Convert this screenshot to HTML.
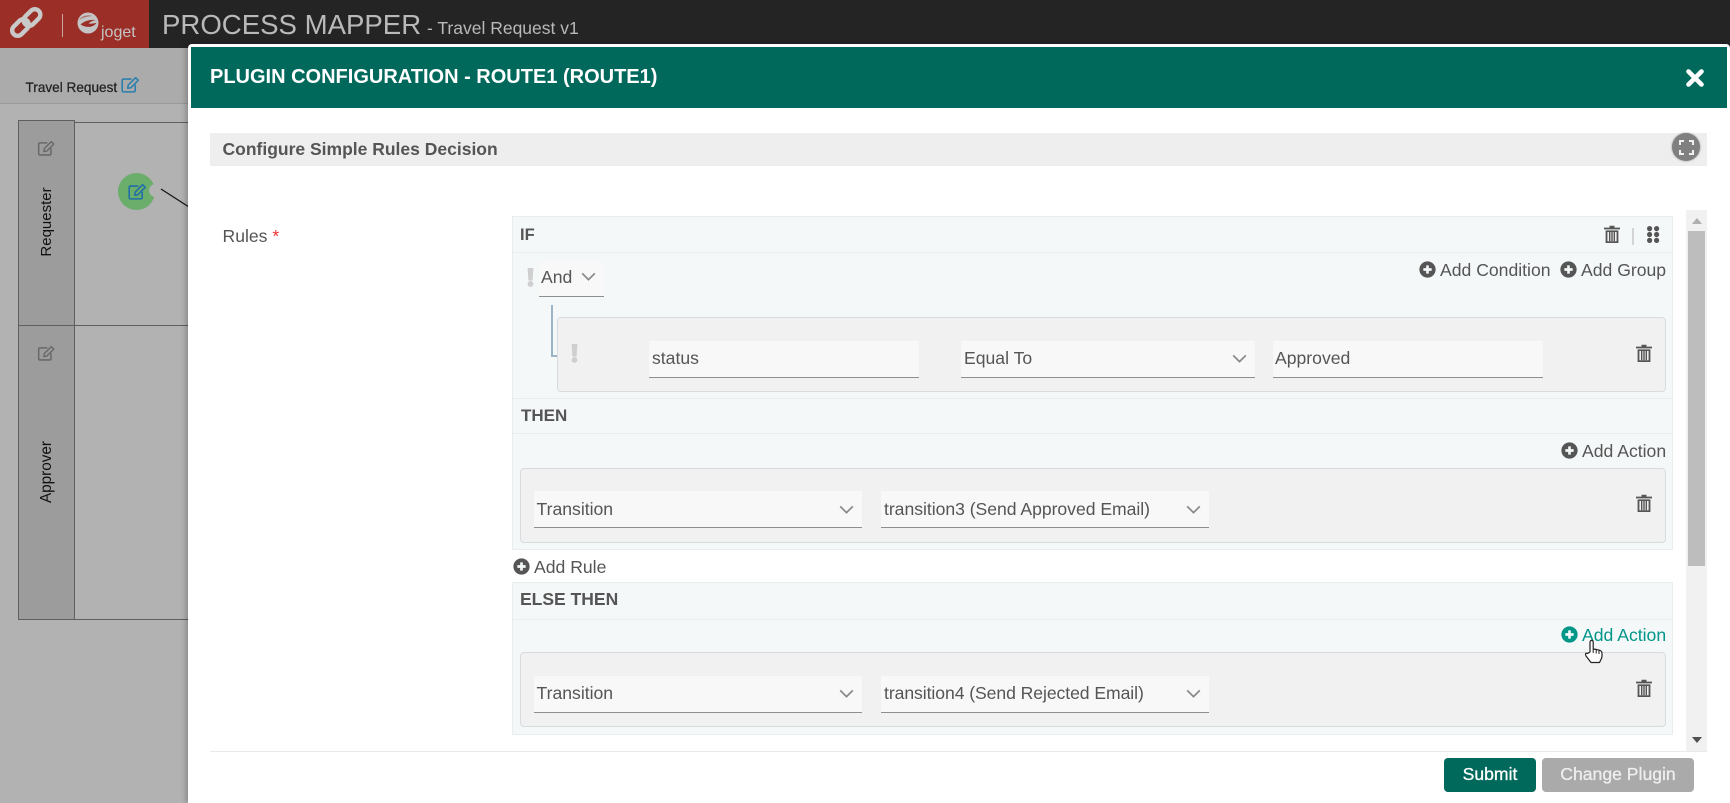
<!DOCTYPE html>
<html><head><meta charset="utf-8"><title>Process Mapper</title>
<style>
html,body{margin:0;padding:0;width:1730px;height:803px;overflow:hidden;background:#b2b2b2;font-family:"Liberation Sans",Arial,sans-serif;color:#555}
.a{position:absolute;box-sizing:border-box}
.t{position:absolute;white-space:nowrap;line-height:20px;font-size:17.6px;color:#555}
.b{font-weight:bold}
.sel{position:absolute;box-sizing:border-box;background:#f8f8f8;border-bottom:1px solid #8e8e8e}
.box{position:absolute;box-sizing:border-box;background:#f1f1f1;border:1px solid #d8dcde;border-radius:4px}
.rule{position:absolute;box-sizing:border-box;background:#f5f8f9;border:1px solid #e8edef}
.line{position:absolute;height:1px;background:#e8edef}
svg{position:absolute;overflow:visible}
</style></head><body>
<svg width="0" height="0" style="position:absolute"><defs>
<symbol id="plus" viewBox="0 0 18 18"><circle cx="9" cy="9" r="8.6" fill="currentColor"/><path d="M9 4.600v8.800M4.600 9h8.800" stroke="#f5f8f9" stroke-width="2.800" fill="none"/></symbol>
<symbol id="trash" viewBox="0 0 16 18"><path d="M0 2.600h16v1.800H0zM5.500 2.600V.8h5v1.800z" fill="#555"/><path d="M1.600 5.400h12.800V18H1.600z" fill="#555"/><path d="M3.400 7h9.200v9.300H3.400z" fill="#f1f1f1"/><path d="M5 7v9.300h1.400V7zM7.300 7v9.300h1.400V7zM9.600 7v9.300h1.400V7z" fill="#555"/></symbol>
<symbol id="chev" viewBox="0 0 16 10"><path d="M1 1.500l7 7 7-7" fill="none" stroke="#8a8a8a" stroke-width="1.900"/></symbol>
<symbol id="edit" viewBox="0 0 20 18"><path d="M11 3.200H2.600A1.400 1.400 0 0 0 1.200 4.600v10.800a1.400 1.400 0 0 0 1.400 1.400h11a1.400 1.400 0 0 0 1.400-1.400V9.200" fill="none" stroke="currentColor" stroke-width="1.700"/><path d="M7.600 9.600L15.400 1.800l2.800 2.800-7.800 7.800-3.400.6z" fill="none" stroke="currentColor" stroke-width="1.600" stroke-linejoin="round"/></symbol>
<symbol id="bang" viewBox="0 0 7 19"><path d="M.6 0h5.800l-.8 12.600H1.400z" fill="#cfcfcf"/><circle cx="3.500" cy="16" r="2.900" fill="#cfcfcf"/></symbol>
</defs></svg>

<!-- header -->
<div class="a" style="left:0;top:0;width:1730px;height:48px;background:#242424"></div>
<div class="a" style="left:0;top:0;width:149px;height:48px;background:#9b2f27"></div>
<svg style="left:0;top:0" width="60" height="48"><g fill="none" stroke="#c9c9c9" stroke-width="4.400"><rect x="-5.500" y="-9.500" width="11" height="19" rx="5.500" transform="translate(20.500 27.500) rotate(45)"/><rect x="-5.500" y="-9.500" width="11" height="19" rx="5.500" transform="translate(32 17.500) rotate(45)"/></g></svg>
<div class="a" style="left:62px;top:14px;width:1px;height:23px;background:#c9a5a2"></div>
<svg style="left:76px;top:11px" width="24" height="24" viewBox="0 0 24 24"><circle cx="12" cy="12" r="10.500" fill="#c4c4c4"/><path d="M4.500 13.500c4-3.500 9-5 15-4.500-3.500 1-5.500 2-7 3.500 2.500.3 5.500 0 8-.8-3 5-10.500 5.500-16 1.800z" fill="#9b2f27"/><path d="M3 9c3-4 8-5.500 13-4-5 .5-9 1.500-13 4z" fill="#9b2f27" opacity=".55"/></svg>
<div class="t" style="left:101px;top:24px;font-size:16px;line-height:18px;color:#c4c4c4">joget</div>
<div class="t" style="left:162px;top:8px;font-size:27.6px;line-height:34px;color:#b9b9b9" id="pm">PROCESS MAPPER</div>
<div class="t" style="left:427px;top:17px;font-size:17.500px;line-height:22px;color:#b9b9b9">- Travel Request v1</div>

<!-- backdrop canvas -->
<div class="a" style="left:0;top:48px;width:188px;height:56px;background:#ababab;border-bottom:1px solid #9a9a9a"></div>
<div class="t" style="left:25.500px;top:79px;font-size:13.600px;line-height:18px;color:#222;-webkit-text-stroke:.25px #222">Travel Request</div>
<svg style="left:121px;top:76px;color:#2b7fae" width="19" height="17"><use href="#edit" width="19" height="17"/></svg>
<div class="a" style="left:18px;top:120px;width:57px;height:206px;background:#9c9c9c;border:1px solid #5f5f5f"></div>
<div class="a" style="left:18px;top:325px;width:57px;height:295px;background:#9c9c9c;border:1px solid #5f5f5f"></div>
<div class="a" style="left:74px;top:122px;width:114px;height:1px;background:#5f5f5f"></div>
<div class="a" style="left:74px;top:325px;width:114px;height:1px;background:#5f5f5f"></div>
<div class="a" style="left:74px;top:619px;width:114px;height:1px;background:#5f5f5f"></div>
<svg style="left:37px;top:140px;color:#696969" width="19" height="16"><use href="#edit" width="19" height="16"/></svg>
<svg style="left:37px;top:345px;color:#696969" width="19" height="16"><use href="#edit" width="19" height="16"/></svg>
<div class="t" style="left:47px;top:222px;font-size:15px;line-height:18px;color:#111;transform:translate(-50%,-50%) rotate(-90deg)">Requester</div>
<div class="t" style="left:47px;top:472px;font-size:15.300px;line-height:18px;color:#111;transform:translate(-50%,-50%) rotate(-90deg)">Approver</div>
<div class="a" style="left:118px;top:173px;width:37px;height:37px;border-radius:50%;background:#6bad6b"></div>
<div class="a" style="left:149px;top:184px;width:13px;height:13px;border-radius:50%;background:#b2b2b2"></div>
<svg style="left:128px;top:183px;color:#1f6fa8" width="19" height="17"><use href="#edit" width="19" height="17"/></svg>
<svg style="left:0;top:0" width="190" height="220"><path d="M161 189L189 207" stroke="#111" stroke-width="1.200"/></svg>

<!-- modal -->
<div class="a" style="left:188px;top:44px;width:1542px;height:759px;background:#fff;border-radius:4px 4px 0 0;box-shadow:-2px 0 6px rgba(0,0,0,.25)"></div>
<div class="a" style="left:191px;top:47px;width:1536px;height:61px;background:#00695c"></div>
<div class="t b" style="left:210px;top:66px;font-size:20px;line-height:22px;color:#fff">PLUGIN CONFIGURATION - ROUTE1 (ROUTE1)</div>
<svg style="left:1686px;top:69px" width="18" height="18"><path d="M2.500 2.500l13 13M15.500 2.500l-13 13" stroke="#fff" stroke-width="4.600" stroke-linecap="round"/></svg>

<div class="a" style="left:210px;top:133px;width:1497px;height:33px;background:#eee"></div>
<div class="t b" style="left:222.500px;top:139px;font-size:17.500px;color:#555">Configure Simple Rules Decision</div>
<div class="a" style="left:1672px;top:133px;width:28px;height:28px;border-radius:50%;background:#808080;box-shadow:0 0 2px rgba(0,0,0,.4)"></div>
<svg style="left:1679px;top:140px" width="15" height="15"><path d="M1 5V1h4M10 1h4v4M14 10v4h-4M5 14H1v-4" fill="none" stroke="#f0f0f0" stroke-width="2"/></svg>

<div class="t" style="left:222.500px;top:226px">Rules <span style="color:#e33">*</span></div>

<!-- scrollbar -->
<div class="a" style="left:1686px;top:210px;width:21px;height:541px;background:#f1f1f1"></div>
<div class="a" style="left:1688px;top:231px;width:17px;height:335px;background:#bdbdbd"></div>
<svg style="left:1692px;top:218px" width="10" height="6"><path d="M0 6L5 0l5 6z" fill="#b0b0b0"/></svg>
<svg style="left:1692px;top:737px" width="10" height="6"><path d="M0 0h10L5 6z" fill="#505050"/></svg>

<!-- rule box -->
<div class="rule" style="left:512px;top:216px;width:1161px;height:334px"></div>
<div class="line" style="left:513px;top:252px;width:1159px"></div>
<div class="line" style="left:513px;top:398px;width:1159px"></div>
<div class="line" style="left:513px;top:433px;width:1159px"></div>
<div class="t b" style="left:520px;top:225px;font-size:16.500px">IF</div>
<svg style="left:1604px;top:225px" width="16" height="18"><use href="#trash" width="16" height="18"/></svg>
<div class="a" style="left:1632px;top:228px;width:2px;height:17px;background:#d4d4d4"></div>
<svg style="left:1647px;top:226px" width="12" height="17" viewBox="0 0 12 17"><g fill="#555"><circle cx="2.600" cy="2.600" r="2.600"/><circle cx="9.600" cy="2.600" r="2.600"/><circle cx="2.600" cy="8.500" r="2.600"/><circle cx="9.600" cy="8.500" r="2.600"/><circle cx="2.600" cy="14.400" r="2.600"/><circle cx="9.600" cy="14.400" r="2.600"/></g></svg>

<svg style="left:1419px;top:261px;color:#555" width="17" height="17"><use href="#plus" width="17" height="17"/></svg>
<div class="t" style="left:1440px;top:260px">Add Condition</div>
<svg style="left:1560px;top:261px;color:#555" width="17" height="17"><use href="#plus" width="17" height="17"/></svg>
<div class="t" style="left:1581px;top:260px">Add Group</div>

<svg style="left:527px;top:268px" width="7" height="19"><use href="#bang" width="7" height="19"/></svg>
<div class="sel" style="left:539px;top:261px;width:65px;height:36px"></div>
<div class="t" style="left:541px;top:267px">And</div>
<svg style="left:581px;top:272px" width="15" height="9"><use href="#chev" width="15" height="9"/></svg>

<div class="a" style="left:551px;top:305px;width:6px;height:52px;border-left:2px solid #9db4c6;border-bottom:2px solid #9db4c6"></div>
<div class="box" style="left:557px;top:317px;width:1109px;height:75px"></div>
<svg style="left:571px;top:344px" width="7" height="19"><use href="#bang" width="7" height="19"/></svg>
<div class="sel" style="left:649px;top:341px;width:270px;height:37px"></div>
<div class="t" style="left:652px;top:348px">status</div>
<div class="sel" style="left:961px;top:341px;width:294px;height:37px"></div>
<div class="t" style="left:964px;top:348px">Equal To</div>
<svg style="left:1232px;top:354px" width="15" height="9"><use href="#chev" width="15" height="9"/></svg>
<div class="sel" style="left:1273px;top:341px;width:270px;height:37px"></div>
<div class="t" style="left:1275px;top:348px">Approved</div>
<svg style="left:1636px;top:344px" width="16" height="18"><use href="#trash" width="16" height="18"/></svg>

<div class="t b" style="left:521px;top:406px;font-size:17px">THEN</div>
<svg style="left:1561px;top:442px;color:#555" width="17" height="17"><use href="#plus" width="17" height="17"/></svg>
<div class="t" style="left:1582px;top:441px">Add Action</div>

<div class="box" style="left:520px;top:468px;width:1146px;height:75px"></div>
<div class="sel" style="left:534px;top:491px;width:328px;height:37px"></div>
<div class="t" style="left:536.500px;top:499px">Transition</div>
<svg style="left:839px;top:505px" width="15" height="9"><use href="#chev" width="15" height="9"/></svg>
<div class="sel" style="left:881px;top:491px;width:328px;height:37px"></div>
<div class="t" style="left:884px;top:499px;letter-spacing:-.03px">transition3 (Send Approved Email)</div>
<svg style="left:1186px;top:505px" width="15" height="9"><use href="#chev" width="15" height="9"/></svg>
<svg style="left:1636px;top:494px" width="16" height="18"><use href="#trash" width="16" height="18"/></svg>

<svg style="left:513px;top:558px;color:#555" width="17" height="17"><use href="#plus" width="17" height="17"/></svg>
<div class="t" style="left:534px;top:557px">Add Rule</div>

<!-- else box -->
<div class="rule" style="left:512px;top:582px;width:1161px;height:153px"></div>
<div class="line" style="left:513px;top:619px;width:1159px"></div>
<div class="t b" style="left:520px;top:589px;font-size:17.500px">ELSE THEN</div>
<svg style="left:1561px;top:626px;color:#009688" width="17" height="17"><use href="#plus" width="17" height="17"/></svg>
<div class="t" style="left:1582px;top:625px;color:#009688">Add Action</div>

<div class="box" style="left:520px;top:652px;width:1146px;height:75px"></div>
<div class="sel" style="left:534px;top:676px;width:328px;height:37px"></div>
<div class="t" style="left:536.500px;top:683px">Transition</div>
<svg style="left:839px;top:689px" width="15" height="9"><use href="#chev" width="15" height="9"/></svg>
<div class="sel" style="left:881px;top:676px;width:328px;height:37px"></div>
<div class="t" style="left:884px;top:683px;letter-spacing:-.07px">transition4 (Send Rejected Email)</div>
<svg style="left:1186px;top:689px" width="15" height="9"><use href="#chev" width="15" height="9"/></svg>
<svg style="left:1636px;top:679px" width="16" height="18"><use href="#trash" width="16" height="18"/></svg>

<svg style="left:1584px;top:639px" width="20" height="25" viewBox="0 0 20 25"><path d="M6 13V3a1.600 1.600 0 0 1 3.200 0v7l1 .1 2 .3 2 .5 2 .6c1.300.6 1.800 1.500 1.800 3v2.500c0 2-.6 3-1.500 4.500l-1 2H7l-5-6.500C1 15 1.500 13.500 3.500 14.500z" fill="#fff" stroke="#222" stroke-width="1.200" stroke-linejoin="round"/><path d="M9.200 10v4M12.200 10.500v4M15 11v4" stroke="#222" stroke-width="1"/></svg>

<!-- footer -->
<div class="a" style="left:210px;top:751px;width:1497px;height:1px;background:#eaeaea"></div>
<div class="a" style="left:1444px;top:758px;width:92px;height:34px;background:#00695c;border-radius:4px"></div>
<div class="t" style="left:1444px;top:764px;width:92px;text-align:center;color:#fff;-webkit-text-stroke:.3px #fff">Submit</div>
<div class="a" style="left:1542px;top:758px;width:152px;height:34px;background:#aaa;border-radius:4px"></div>
<div class="t" style="left:1542px;top:764px;width:152px;text-align:center;color:#eee;-webkit-text-stroke:.3px #eee">Change Plugin</div>
</body></html>
